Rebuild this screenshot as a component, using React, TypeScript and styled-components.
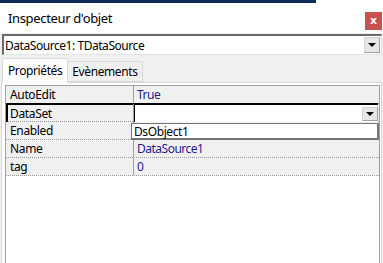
import React from "react";
import styled, { createGlobalStyle } from "styled-components";

const GlobalStyle = createGlobalStyle`
  html, body { margin: 0; padding: 0; background: #ffffff; }
  body { font-family: "Noto Sans", "Open Sans", sans-serif; width: 383px; height: 263px; overflow: hidden; }
  * { box-sizing: border-box; }
`;

const Window = styled.div`
  width: 383px;
  height: 263px;
  display: flex;
  flex-direction: column;
  background: #f0f0f0;
`;

const TopStrip = styled.div`
  height: 3px;
  display: flex;
  background: #ffffff;
`;

const TaskBar = styled.div`
  width: 316px;
  background: #0e2a5a;
`;

const TitleBar = styled.div`
  height: 30px;
  background: #ffffff;
  display: flex;
  align-items: center;
  justify-content: space-between;
  padding: 0 1px 0 8px;
`;

const Title = styled.span`
  font-size: 13px;
  color: #000;
  letter-spacing: -0.35px;
`;

const CloseButton = styled.div`
  width: 17px;
  height: 18px;
  margin-top: 5px;
  background: #c75050;
  color: #fff;
  font-size: 11px;
  font-weight: bold;
  display: flex;
  align-items: center;
  justify-content: center;
  font-family: "DejaVu Sans", sans-serif;
`;

const Body = styled.div`
  flex: 1;
  display: flex;
  flex-direction: column;
  padding: 1px 1px 0 2px;
  position: relative;
`;

const Combo = styled.div`
  height: 21px;
  background: #fff;
  border-style: solid;
  border-width: 2px 1px 1px 2px;
  border-color: #6a6a6a #e3e3e3 #e3e3e3 #6a6a6a;
  display: flex;
  align-items: center;
  padding-left: 1px;
  padding-right: 1px;
`;

const ComboText = styled.span`
  flex: 1;
  font-size: 12px;
  letter-spacing: -0.45px;
  color: #000;
`;

const DropButton = styled.div<{ $h?: number }>`
  width: 16px;
  height: ${(p) => p.$h ?? 16}px;
  margin-left: auto;
  background: #e6e6e6;
  border: 1px solid #d4d4d4;
  border-right-color: #a0a0a0;
  border-bottom-color: #a0a0a0;
  display: flex;
  align-items: center;
  justify-content: center;
  flex-shrink: 0;
`;

const Arrow = styled.div`
  width: 0;
  height: 0;
  border-left: 4px solid transparent;
  border-right: 4px solid transparent;
  border-top: 4px solid #000;
`;

const TabRow = styled.div`
  display: flex;
  align-items: flex-end;
  height: 25px;
  margin-top: 2px;
  position: relative;
  z-index: 1;
`;

const Tab = styled.div<{ $active?: boolean }>`
  height: ${(p) => (p.$active ? 25 : 21)}px;
  padding: 0 ${(p) => (p.$active ? 5 : 4)}px;
  display: flex;
  align-items: center;
  font-size: 12px;
  letter-spacing: -0.4px;
  color: #000;
  background: ${(p) => (p.$active ? "#ffffff" : "#f0f0f0")};
  border: 1px solid #d9d9d9;
  border-bottom: ${(p) => (p.$active ? "1px solid #ffffff" : "1px solid #d9d9d9")};
  margin-left: ${(p) => (p.$active ? "0" : "-1px")};
  margin-bottom: ${(p) => (p.$active ? "-1px" : "0")};
`;

const TabPanel = styled.div`
  flex: 1;
  margin-left: -1px;
  border: 1px solid #d9d9d9;
  border-bottom: none;
  background: #ffffff;
  padding: 2px 1px 0 3px;
  display: flex;
  flex-direction: column;
`;

const Grid = styled.div`
  flex: 1;
  border-left: 1px solid #a0a0a0;
  border-right: 1px solid #a0a0a0;
  border-top: 1px solid #a0a0a0;
  background: #ffffff;
  position: relative;
`;

const Row = styled.div`
  display: grid;
  grid-template-columns: 128px 1fr;
  height: 18px;
  background: #f0f0f0;
  border-bottom: 1px dotted #9a9a9a;
`;

const NameCell = styled.div<{ $sel?: boolean }>`
  font-size: 12px;
  letter-spacing: -0.35px;
  color: #000;
  padding-left: ${(p) => (p.$sel ? 2 : 4)}px;
  display: flex;
  align-items: center;
  border-right: 1px solid #a0a0a0;
  ${(p) =>
    p.$sel
      ? "border-top: 2px solid #000; border-left: 2px solid #000; margin-top: -1px;"
      : ""}
`;

const ValueCell = styled.div<{ $edit?: boolean }>`
  font-size: 12px;
  letter-spacing: -0.5px;
  color: #1c1c8e;
  padding-left: 3px;
  display: flex;
  align-items: center;
  ${(p) =>
    p.$edit
      ? "background: #ffffff; border-top: 2px solid #000; border-left: 1px solid #000; margin-top: -1px; padding-right: 0; margin-right: 1px;"
      : ""}
`;

const Popup = styled.div`
  position: absolute;
  left: 125px;
  top: 37px;
  width: 248px;
  height: 17px;
  background: #ffffff;
  border: 1px solid #767676;
  border-right-width: 2px;
  border-bottom-width: 2px;
  font-size: 12px;
  letter-spacing: -0.4px;
  color: #000;
  display: flex;
  align-items: center;
  padding-left: 2px;
`;

const rows: { name: string; value: string; edit?: boolean }[] = [
  { name: "AutoEdit", value: "True" },
  { name: "DataSet", value: "", edit: true },
  { name: "Enabled", value: "" },
  { name: "Name", value: "DataSource1" },
  { name: "tag", value: "0" },
];

export default function App() {
  return (
    <Window>
      <GlobalStyle />
      <TopStrip>
        <TaskBar />
      </TopStrip>
      <TitleBar>
        <Title>Inspecteur d'objet</Title>
        <CloseButton>x</CloseButton>
      </TitleBar>
      <Body>
        <Combo>
          <ComboText>DataSource1: TDataSource</ComboText>
          <DropButton>
            <Arrow />
          </DropButton>
        </Combo>
        <TabRow>
          <Tab $active>Propriétés</Tab>
          <Tab>Evènements</Tab>
        </TabRow>
        <TabPanel>
          <Grid>
            {rows.map((r) => (
              <Row key={r.name}>
                <NameCell $sel={r.edit}>{r.name}</NameCell>
                <ValueCell $edit={r.edit}>
                  {r.value}
                  {r.edit && (
                    <DropButton $h={14}>
                      <Arrow />
                    </DropButton>
                  )}
                </ValueCell>
              </Row>
            ))}
            <Popup>DsObject1</Popup>
          </Grid>
        </TabPanel>
      </Body>
    </Window>
  );
}
